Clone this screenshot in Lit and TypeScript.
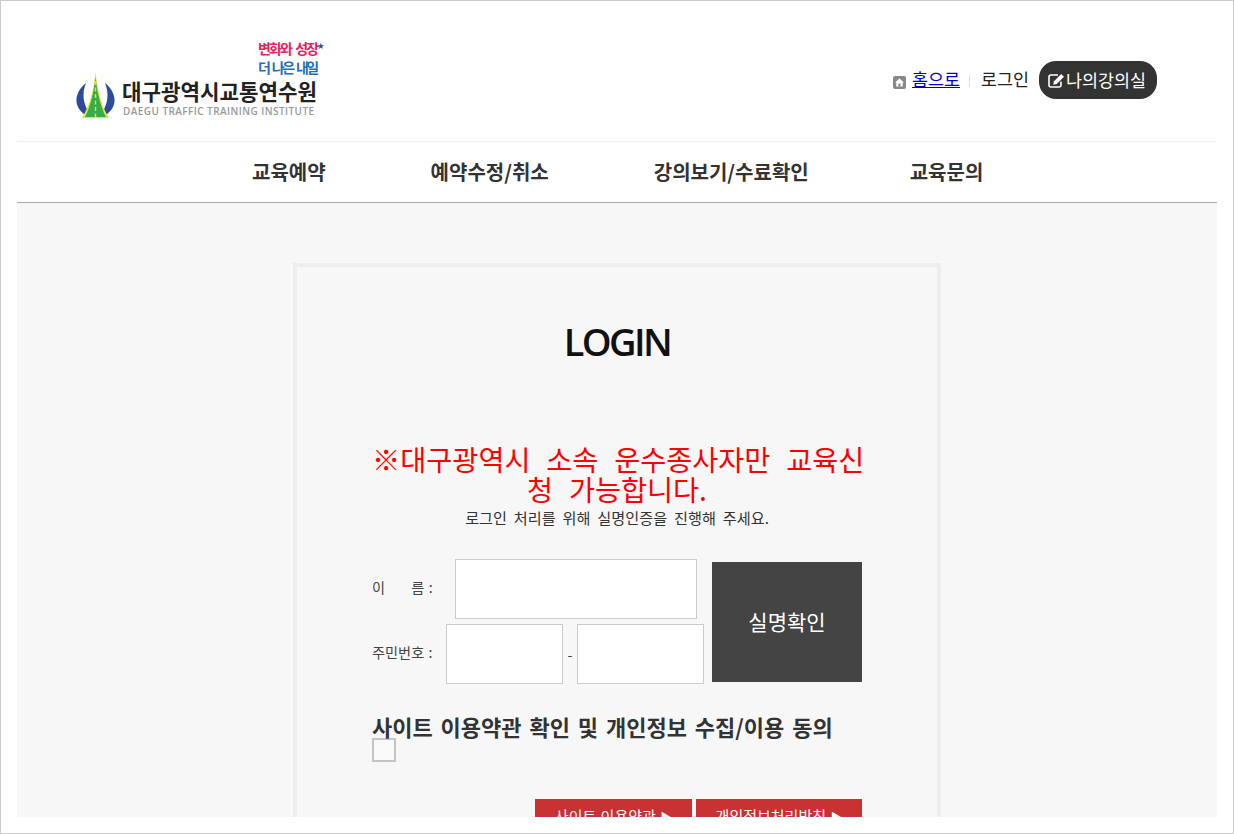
import { LitElement, html, css } from "lit";
import { customElement } from "lit/decorators.js";

@customElement("app-root")
export class AppRoot extends LitElement {
  static styles = css`
    :host { display: block; font-family: "Noto Sans CJK KR", "Noto Sans", sans-serif; color: #333; }
    * { box-sizing: border-box; }
    .frame { width: 1234px; height: 834px; border: 1px solid #ccc; padding: 0 16px 16px; background: #fff; }
    .page { height: 816px; overflow: hidden; display: flex; flex-direction: column; }
    .top { height: 141px; flex: none; display: flex; justify-content: space-between; align-items: flex-start; border-bottom: 1px solid #eee; }
    .logo { margin: 38px 0 0 59px; width: 248px; display: flex; flex-direction: column; }
    .slogan { margin-left: 182px; font-size: 14px; line-height: 19px; font-weight: 700; letter-spacing: -1.9px; word-spacing: 3px; white-space: nowrap; }
    .s1 { color: #e0245e; }
    .s1 sup { font-size: 7px; line-height: 0; color: #1c4f9c; margin-left: 0; }
    .s2 { color: #1f6fb8; letter-spacing: -2.6px; }
    .brand { display: flex; align-items: flex-start; gap: 7px; margin-top: -6px; }
    .brand svg { flex: none; width: 39px; height: 48px; }
    .names { margin-top: 7px; }
    .ko { font-size: 21.2px; line-height: 26px; font-weight: 700; color: #222; white-space: nowrap; }
    .en { font-size: 10px; line-height: 12px; font-weight: 600; color: #999; white-space: nowrap; font-family: "Open Sans", sans-serif; letter-spacing: 0.43px; margin: 1px 0 0 1px; }
    .util { display: flex; align-items: center; margin: 60px 60px 0 0; font-size: 17.4px; height: 38px; }
    .home-ic { width: 13px; height: 13px; margin-right: 6px; margin-top: 4px; }
    .util a { color: #0000cc; text-decoration: underline; margin-bottom: 3px; }
    .sep { width: 1px; height: 12px; background: #ddd; margin: 2px 11px 0 9px; }
    .login { color: #222; margin-right: 10px; margin-bottom: 3px; }
    .pill { width: 118px; height: 38px; border-radius: 17px; background: #333; color: #fff; display: flex; align-items: center; padding-left: 9px; gap: 1px; }
    .pill span { margin-bottom: 2px; }
    .pill svg { width: 17px; height: 17px; flex: none; }
    nav { height: 61px; flex: none; border-bottom: 1px solid #aaa; display: flex; align-items: center; font-size: 20px; font-weight: 700; color: #333; padding: 0 0 2px 235px; }
    nav span { white-space: nowrap; }
    .n1 { margin-right: 105px; }
    .n2 { margin-right: 105px; }
    .n3 { margin-right: 101px; }
    main { flex: 1; background: #f7f7f7; display: flex; justify-content: center; padding-top: 60px; }
    .card { width: 648px; flex: none; border: 4px solid #eee; padding: 0 75px; height: 800px; }
    h1 { margin: 49px 0 0; font-family: "Open Sans", sans-serif; font-size: 38px; line-height: 50px; font-weight: 600; color: #111; text-align: center; letter-spacing: -2.6px; }
    .notice { margin: 78px 0 0; font-size: 28.3px; line-height: 30px; color: #f00; text-align: center; font-weight: 400; word-spacing: 9.5px; white-space: nowrap; }
    .sub { margin: 2px 0 0; font-size: 15.2px; line-height: 22px; color: #333; text-align: center; word-spacing: 3.4px; }
    .form { display: flex; gap: 8px; margin-top: 31px; align-items: flex-start; }
    .fields { width: 332px; display: flex; flex-direction: column; gap: 5px; }
    .row { display: flex; align-items: center; font-size: 14.2px; color: #444; height: 60px; }
    .label { width: 74px; white-space: pre; flex: none; padding-bottom: 4px; word-spacing: 1.2px; }
    .label.ssn { word-spacing: 1px; }
    .box { height: 60px; border: 1px solid #ccc; background: #fff; }
    .name { width: 242px; margin-left: 9px; }
    .ssn1 { width: 117px; }
    .ssn2 { width: 127px; }
    .dash { width: 14px; text-align: center; }
    .check-btn { width: 150px; height: 120px; margin-top: 3px; padding-bottom: 2px; background: #444; color: #fff; font-size: 21px; display: flex; align-items: center; justify-content: center; }
    h2 { margin: 29px 0 0; font-size: 22px; line-height: 26px; font-weight: 700; color: #333; white-space: nowrap; word-spacing: 2.9px; }
    .cb { width: 24px; height: 24px; border: 2px solid #c4c4c4; background: #f9f9f9; margin-top: -1px; }
    .links { display: flex; justify-content: flex-end; gap: 4px; margin-top: 37px; }
    .links div { height: 44px; background: #c83232; color: #fff; font-size: 15px; text-align: center; line-height: 34px; word-spacing: 1px; }
    .tri { font-size: 12px; }
    .l1 { width: 157px; }
    .l2 { width: 166px; }
  `;

  render() {
    return html`
      <div class="frame"><div class="page">
        <header class="top">
          <div class="logo">
            <div class="slogan s1">변화와 성장<sup>★</sup></div>
            <div class="slogan s2">더 나은 내일</div>
            <div class="brand">
              <svg viewBox="0 0 39 48">
                <path d="M10 12 C2 18 -2 28 2 36 C5 42 11 46 16 46 C10 38 4 27 10 12Z" fill="#2b4b9b"/>
                <path d="M29 12 C37 18 41 28 37 36 C34 42 28 46 23 46 C29 38 35 27 29 12Z" fill="#2b4b9b"/>
                <path d="M19.5 1 C21 18 25 34 33 47 H6 C14 34 18 18 19.5 1Z" fill="#e6e23a"/>
                <path d="M19.5 6 C21 20 24 34 30 46 H9 C15 34 18 20 19.5 6Z" fill="#35ad49"/>
                <path d="M19.5 10 V46" stroke="#e6e23a" stroke-width="1.4" stroke-dasharray="4 2.5"/>
              </svg>
              <div class="names">
                <div class="ko">대구광역시교통연수원</div>
                <div class="en">DAEGU TRAFFIC TRAINING INSTITUTE</div>
              </div>
            </div>
          </div>
          <div class="util">
            <svg class="home-ic" viewBox="0 0 13 13">
              <rect width="13" height="13" rx="2" fill="#888"/>
              <path d="M6.5 2.5 L11 6.5 H9.7 V10.5 H3.3 V6.5 H2Z" fill="#fff"/>
              <rect x="5.4" y="7.6" width="2.2" height="2.9" fill="#888"/>
            </svg>
            <a>홈으로</a>
            <span class="sep"></span>
            <span class="login">로그인</span>
            <div class="pill">
              <svg viewBox="0 0 17 17" fill="none">
                <path d="M13 9.5 V13 A2 2 0 0 1 11 15 H3 A2 2 0 0 1 1 13 V5 A2 2 0 0 1 3 3 H10" stroke="#fff" stroke-width="1.6"/>
                <path d="M6 9.3 L13.2 2 L16 4.8 L8.7 12 L5.2 12.8Z" fill="#fff"/>
              </svg>
              <span>나의강의실</span>
            </div>
          </div>
        </header>
        <nav>
          <span class="n1">교육예약</span>
          <span class="n2">예약수정/취소</span>
          <span class="n3">강의보기/수료확인</span>
          <span>교육문의</span>
        </nav>
        <main>
          <section class="card">
            <h1>LOGIN</h1>
            <h3 class="notice">※대구광역시 소속 운수종사자만 교육신<br />청 가능합니다.</h3>
            <p class="sub">로그인 처리를 위해 실명인증을 진행해 주세요.</p>
            <div class="form">
              <div class="fields">
                <div class="row"><span class="label">이      름 :</span><div class="box name"></div></div>
                <div class="row"><span class="label ssn">주민번호 :</span><div class="box ssn1"></div><span class="dash">-</span><div class="box ssn2"></div></div>
              </div>
              <div class="check-btn">실명확인</div>
            </div>
            <h2>사이트 이용약관 확인 및 개인정보 수집/이용 동의</h2>
            <div class="cb"></div>
            <div class="links">
              <div class="l1">사이트 이용약관 <span class="tri">▶</span></div>
              <div class="l2">개인정보처리방침 <span class="tri">▶</span></div>
            </div>
          </section>
        </main>
      </div></div>
    `;
  }
}
